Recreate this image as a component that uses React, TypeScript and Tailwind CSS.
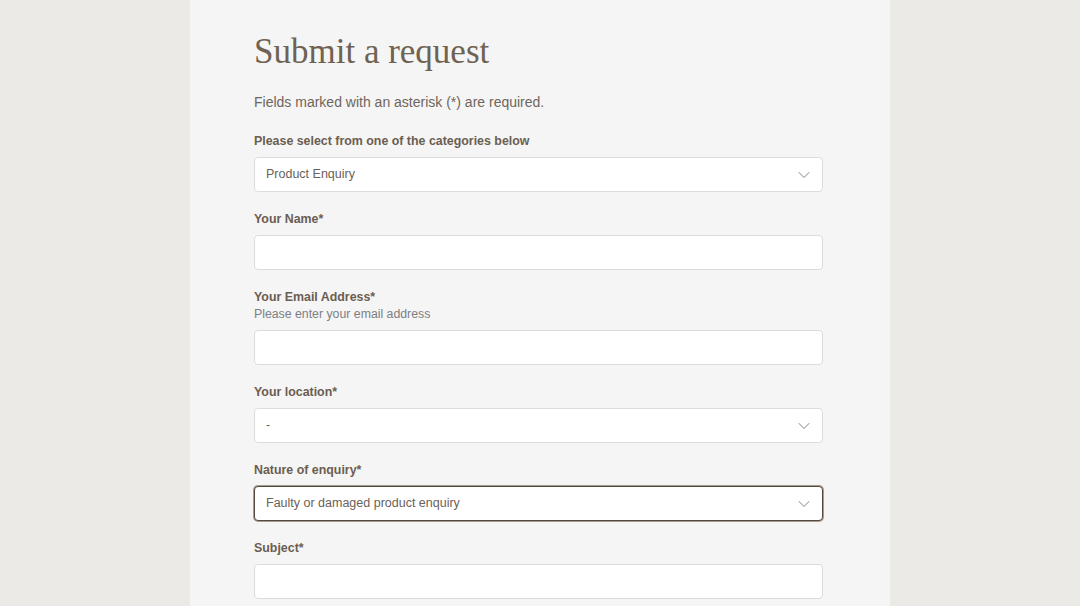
import { ChevronDown } from 'lucide-react';

const labelCls = 'block text-[12.4px] leading-4 font-bold text-[#6b5d51]';
const boxCls =
  'flex items-center h-[35px] w-full rounded-[4px] border border-[#dedcda] bg-white pl-[11px] pr-[8px] text-[12.5px] text-[#6b6158]';

const Field = ({
  label,
  hint,
  value,
  select,
  focused,
}: {
  label: string;
  hint?: string;
  value?: string;
  select?: boolean;
  focused?: boolean;
}) => (
  <div className="mb-[19px]">
    <label className={labelCls}>{label}</label>
    {hint && <div className="text-[12.3px] leading-4 mt-[1px] text-[#7d7f84]">{hint}</div>}
    <div
      className={
        focused
          ? 'mt-2 flex items-center h-[35px] w-full rounded-[4px] border border-[#55493f] bg-white pl-[11px] pr-[8px] text-[12.5px] text-[#6b6158] shadow-[0_0_0_1px_#a69b90]'
          : 'mt-2 ' + boxCls
      }
    >
      <span className="flex-1">{value}</span>
      {select && <ChevronDown className="w-5 h-5 text-[#7b7670]" strokeWidth={1.1} />}
    </div>
  </div>
);

export default function App() {
  return (
    <div
      className="min-h-[606px] h-[606px] overflow-hidden bg-[#ebeae7] flex justify-center"
      style={{ fontFamily: '"Liberation Sans", Arial, sans-serif' }}
    >
      <div className="w-[700px] bg-[#f5f5f5] pl-[64px] pr-[67px] pt-[33px]">
        <h1
          className="text-[35px] leading-[38px] text-[#6f6253]"
          style={{ fontFamily: '"Liberation Serif", "Times New Roman", serif' }}
        >
          Submit a request
        </h1>
        <p className="mt-[22px] text-[14px] leading-[18px] text-[#6f655c]">
          Fields marked with an asterisk (*) are required.
        </p>
        <div className="mt-[22px]">
          <Field label="Please select from one of the categories below" value="Product Enquiry" select />
          <Field label="Your Name*" />
          <Field label="Your Email Address*" hint="Please enter your email address" />
          <Field label="Your location*" value="-" select />
          <Field label="Nature of enquiry*" value="Faulty or damaged product enquiry" select focused />
          <Field label="Subject*" />
        </div>
      </div>
    </div>
  );
}
